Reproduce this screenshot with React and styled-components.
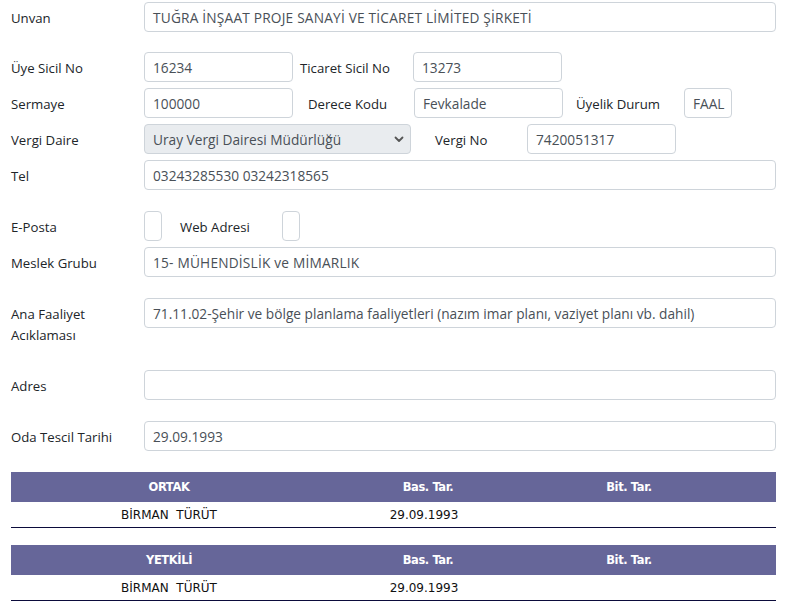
import React from "react";
import styled, { createGlobalStyle } from "styled-components";

const Global = createGlobalStyle`
  html, body { margin: 0; padding: 0; background: #fff; }
  body { font-family: "Open Sans", "Noto Sans", sans-serif; font-size: 13.2px; color: #212529; }
  * { box-sizing: border-box; }
`;

const Page = styled.div`
  padding: 2px 11px 0 11px;
  width: 787px;
`;

const Row = styled.div`
  display: flex;
  align-items: flex-start;
  margin-top: ${(p) => p.$mt || 0}px;
`;

const Label = styled.div`
  width: 133px;
  flex: none;
  padding-top: 6px;
  line-height: 21px;
  color: #212529;
`;

const SubLabel = styled.div`
  width: ${(p) => p.$w}px;
  padding-left: ${(p) => p.$pl}px;
  flex: none;
  padding-top: 6px;
  line-height: 21px;
  color: #212529;
  white-space: nowrap;
`;

const Field = styled.div`
  height: 30px;
  width: ${(p) => (p.$w ? `${p.$w}px` : "auto")};
  flex: ${(p) => (p.$w ? "none" : "1")};
  border: 1px solid #ced4da;
  border-radius: 4px;
  padding: 0 8px;
  display: flex;
  align-items: center;
  color: #495057;
  font-size: 13.7px;
  letter-spacing: ${(p) => (p.$caps ? "0.2px" : "0")};
  background: #fff;
  white-space: nowrap;
  overflow: hidden;
`;

const Select = styled(Field)`
  background: #e9ecef;
  justify-content: space-between;
  padding-right: 6px;
`;

const Table = styled.div`
  margin-top: ${(p) => p.$mt}px;
`;

const Grid = styled.div`
  display: grid;
  grid-template-columns: 316px 202px 200px 1fr;
`;

const Head = styled(Grid)`
  background: #666699;
  height: 30px;
  align-items: center;
  color: #fff;
  font-family: "DejaVu Sans", Verdana, sans-serif;
  font-weight: bold;
  font-size: 11.5px;
  letter-spacing: -0.4px;
`;

const Cell = styled.div`
  text-align: center;
`;

const DataCell = styled.div`
  text-align: center;
  padding-right: ${(p) => p.$pr || 0}px;
`;

const Body = styled(Grid)`
  height: 26px;
  align-items: center;
  border-bottom: 1px solid #0b0b3b;
  font-family: "DejaVu Sans", Verdana, sans-serif;
  font-size: 12px;
  color: #111;
`;

const Chevron = () => (
  <svg width="10" height="7" viewBox="0 0 10 7">
    <path d="M1.5 1.5 L5 5 L8.5 1.5" fill="none" stroke="#555" strokeWidth="1.8" strokeLinecap="round" strokeLinejoin="round" />
  </svg>
);

function PeopleTable({ title, mt }) {
  return (
    <Table $mt={mt}>
      <Head>
        <Cell>{title}</Cell>
        <Cell>Bas. Tar.</Cell>
        <Cell>Bit. Tar.</Cell>
        <Cell />
      </Head>
      <Body>
        <DataCell>BİRMAN&nbsp; TÜRÜT</DataCell>
        <DataCell $pr={8}>29.09.1993</DataCell>
        <DataCell />
        <DataCell />
      </Body>
    </Table>
  );
}

export default function App() {
  return (
    <Page>
      <Global />
      <Row>
        <Label>Unvan</Label>
        <Field $caps>TUĞRA İNŞAAT PROJE SANAYİ VE TİCARET LİMİTED ŞİRKETİ</Field>
      </Row>
      <Row $mt={20}>
        <Label>Üye Sicil No</Label>
        <Field $w={149}>16234</Field>
        <SubLabel $w={120} $pl={7}>Ticaret Sicil No</SubLabel>
        <Field $w={149}>13273</Field>
      </Row>
      <Row $mt={6}>
        <Label>Sermaye</Label>
        <Field $w={149}>100000</Field>
        <SubLabel $w={121} $pl={15}>Derece Kodu</SubLabel>
        <Field $w={149}>Fevkalade</Field>
        <SubLabel $w={121} $pl={13}>Üyelik Durum</SubLabel>
        <Field $w={48}>FAAL</Field>
      </Row>
      <Row $mt={6}>
        <Label>Vergi Daire</Label>
        <Select $w={267}>
          <span>Uray Vergi Dairesi Müdürlüğü</span>
          <Chevron />
        </Select>
        <SubLabel $w={116} $pl={24}>Vergi No</SubLabel>
        <Field $w={149}>7420051317</Field>
      </Row>
      <Row $mt={6}>
        <Label>Tel</Label>
        <Field>03243285530 03242318565</Field>
      </Row>
      <Row $mt={21}>
        <Label>E-Posta</Label>
        <Field $w={16} />
        <SubLabel $w={120} $pl={18}>Web Adresi</SubLabel>
        <Field $w={17} />
      </Row>
      <Row $mt={6}>
        <Label>Meslek Grubu</Label>
        <Field $caps>15- MÜHENDİSLİK ve MİMARLIK</Field>
      </Row>
      <Row $mt={21}>
        <Label>
          Ana Faaliyet
          <br />
          Acıklaması
        </Label>
        <Field>71.11.02-Şehir ve bölge planlama faaliyetleri (nazım imar planı, vaziyet planı vb. dahil)</Field>
      </Row>
      <Row $mt={24}>
        <Label>Adres</Label>
        <Field />
      </Row>
      <Row $mt={21}>
        <Label>Oda Tescil Tarihi</Label>
        <Field>29.09.1993</Field>
      </Row>
      <PeopleTable title="ORTAK" mt={21} />
      <PeopleTable title="YETKİLİ" mt={17} />
    </Page>
  );
}
